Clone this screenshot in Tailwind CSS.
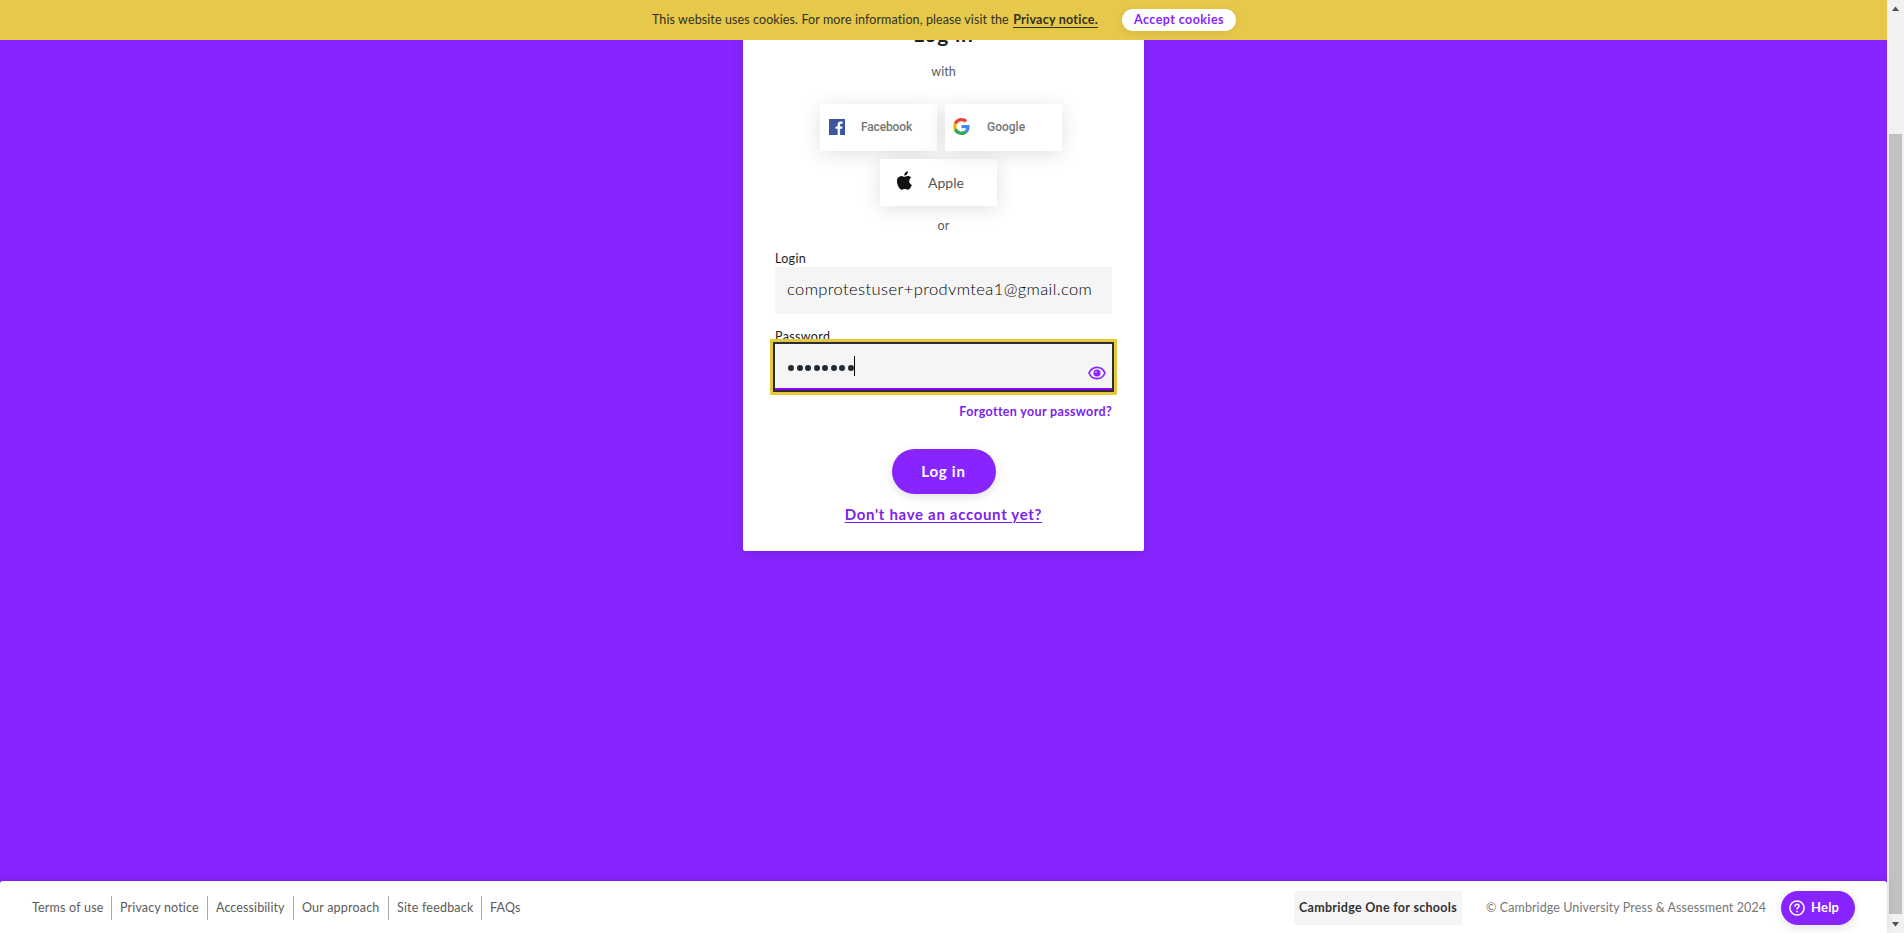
<!DOCTYPE html>
<html lang="en">
<head>
<meta charset="utf-8">
<title>Log in | Cambridge One</title>
<script src="https://cdn.jsdelivr.net/npm/@tailwindcss/browser@4"></script>
</head>
<body class="h-[933px] w-[1904px] overflow-hidden bg-white font-['Lato',sans-serif] text-[12.5px] text-[#5b5b5b]">
<div class="flex h-full">
  <div class="relative flex w-[1887px] flex-col bg-[#8724ff]">
    <header class="absolute inset-x-0 top-0 z-10 flex h-10 items-center bg-[#e6c84b] pl-[652px] text-[#33311f]">
      <p class="flex w-[446px] justify-between whitespace-nowrap leading-4"><span class="tracking-[0.1px]">This website uses cookies. For more information, please visit the</span><a class="border-b border-[#33311f] font-bold leading-[15px] tracking-[0.25px]">Privacy notice.</a></p>
      <button class="ml-6 h-[22px] w-[114px] rounded-full bg-white text-center font-bold tracking-[0.42px] text-[#8724ff] shadow-[0_2px_8px_rgba(0,0,0,0.08)]">Accept cookies</button>
    </header>

    <main class="flex-1 pl-[743px]">
      <section class="flex h-[551px] w-[401px] flex-col items-center rounded-b-[2px] bg-white pt-5 shadow-[0_2px_12px_rgba(0,0,0,0.12)]">
        <h1 class="h-7 text-[21px] font-bold leading-7 tracking-[0.8px] text-[#222]">Log in</h1>
        <p class="mt-4 h-4 leading-4">with</p>
        <div class="mt-6 flex w-full gap-2 pl-[77px] font-['Roboto',sans-serif] text-xs font-medium text-[#757575]">
          <button class="flex h-[47px] w-[117px] items-center bg-white pb-[2px] pl-[9px] shadow-[0_3px_20px_rgba(0,0,0,0.12)]">
            <svg class="size-4" viewBox="0 0 16 16"><path fill="#3b55a0" d="M0 0h16v16h-4.900v-6.200h2.100l.3-2.400h-2.400V5.900c0-.7.200-1.200 1.200-1.200h1.300V2.500c-.2 0-1-.1-1.900-.1-1.900 0-3.100 1.100-3.100 3.200v1.800H6.500v2.400h2.100V16H0z"/></svg>
            <span class="ml-4 tracking-[-0.15px]">Facebook</span>
          </button>
          <button class="relative z-[1] flex h-[47px] w-[117px] items-center bg-white pb-[2px] pl-[8px] shadow-[0_3px_20px_rgba(0,0,0,0.12)]">
            <svg class="size-[17px]" viewBox="0 0 48 48"><path fill="#EA4335" d="M24 9.500c3.540 0 6.710 1.220 9.210 3.600l6.850-6.850C35.900 2.380 30.470 0 24 0 14.620 0 6.510 5.380 2.560 13.220l7.980 6.190C12.430 13.720 17.740 9.500 24 9.500z"/><path fill="#4285F4" d="M46.980 24.550c0-1.570-.15-3.090-.38-4.550H24v9.020h12.940c-.58 2.960-2.260 5.480-4.780 7.180l7.730 6c4.510-4.180 7.090-10.360 7.090-17.650z"/><path fill="#FBBC05" d="M10.530 28.590A14.500 14.500 0 0 1 9.770 24c0-1.600.27-3.140.76-4.590l-7.980-6.190A23.900 23.900 0 0 0 0 24c0 3.880.92 7.540 2.560 10.780z"/><path fill="#34A853" d="M24 48c6.480 0 11.930-2.130 15.890-5.810l-7.730-6c-2.150 1.450-4.920 2.300-8.160 2.300-6.260 0-11.570-4.220-13.470-9.910l-7.980 6.190C6.510 42.620 14.620 48 24 48z"/></svg>
            <span class="ml-[17px]">Google</span>
          </button>
        </div>
        <button class="mr-[10px] mt-2 flex h-[47px] w-[117px] shrink-0 items-center self-center bg-white pl-[15px] shadow-[0_3px_20px_rgba(0,0,0,0.12)]">
          <svg class="mb-[5px] h-[21px] w-[17px]" viewBox="0 0 17 21" preserveAspectRatio="none"><path fill="#111" d="M14.200 11.200c0-2.200 1.700-3.300 1.900-3.500-1-1.600-2.700-1.800-3.300-1.800-1.400-.1-2.700.8-3.400.8s-1.800-.8-2.900-.8C5 6 3.600 6.800 2.800 8.100c-1.700 2.800-.4 7 1.100 9.300.8 1.100 1.700 2.400 2.900 2.300 1.200 0 1.600-.7 3-.7s1.800.7 3 .7c1.300 0 2.100-1.100 2.800-2.300.9-1.300 1.300-2.500 1.300-2.600 0 0-2.700-1-2.700-3.600zM12 4.200c.6-.8 1-1.800.9-2.900-.9 0-2 .6-2.700 1.400-.6.7-1.100 1.700-.9 2.800 1 .1 2-.5 2.700-1.300z"/></svg>
          <span class="ml-4 text-[14px] text-[#555]">Apple</span>
        </button>
        <p class="mt-3 h-4 leading-4 tracking-[0.2px]">or</p>

        <form class="mt-[17px] flex w-[337px] flex-col">
          <label class="h-4 leading-4 tracking-[0.3px] text-[#222]">Login</label>
          <div class="flex h-[47px] items-center bg-[#f5f5f5] pb-[2px] pl-3 text-[16.5px] text-black"><span class="font-light tracking-[0.4px]">comprotestuser+prodvmtea1@gmail.com</span></div>
          <label class="mt-[15px] h-[15px] leading-4 tracking-[0.35px] text-[#222]">Password</label>
          <div class="relative flex h-[46px] items-center border-b-2 border-[#8f00ff] bg-[#f5f5f5] pl-[13px] shadow-[0_0_0_2px_#2d2d2d,0_0_0_5px_#e6c83f]">
            <span class="flex h-5 items-center gap-[2.5px] border-r border-black pt-[3px]">
              <i class="size-[6px] rounded-full bg-[#222b33]"></i><i class="size-[6px] rounded-full bg-[#222b33]"></i><i class="size-[6px] rounded-full bg-[#222b33]"></i><i class="size-[6px] rounded-full bg-[#222b33]"></i><i class="size-[6px] rounded-full bg-[#222b33]"></i><i class="size-[6px] rounded-full bg-[#222b33]"></i><i class="size-[6px] rounded-full bg-[#222b33]"></i><i class="size-[6px] rounded-full bg-[#222b33]"></i>
            </span>
            <svg class="ml-auto mr-[6px] mt-[14px] h-[14px] w-[18px]" viewBox="0 0 18 14" fill="none"><path stroke="#8724ff" stroke-width="1.700" d="M1 7C4.300-.6 13.700-.6 17 7 13.700 14.600 4.300 14.600 1 7z"/><circle cx="9" cy="7" r="3.500" fill="#8724ff"/><circle cx="8" cy="6" r="1" fill="#c9a0ff"/></svg>
          </div>
          <a class="mt-[14px] h-4 self-end font-bold leading-4 tracking-[0.34px] text-[#7d22ee]">Forgotten your password?</a>
        </form>
        <button class="mt-[29px] h-[45px] w-[104px] shrink-0 rounded-full bg-[#8724ff] pb-[1px] text-[15px] font-bold tracking-[0.75px] text-white shadow-[0_3px_10px_rgba(0,0,0,0.12)]">Log in</button>
        <a class="mt-[10px] h-5 text-[15px] font-bold leading-5 tracking-[0.68px] text-[#7d22ee] underline underline-offset-2">Don't have an account yet?</a>
      </section>
    </main>

    <footer class="flex h-[52px] items-center rounded-t-[3px] bg-white pl-[32px] pt-[1px] shadow-[0_-2px_8px_rgba(0,0,0,0.1)]">
      <nav class="flex h-6 items-center whitespace-nowrap leading-6 tracking-[0.2px]">
        <a class="h-6 w-[80px] border-r border-[#aaa]">Terms of use</a>
        <a class="h-6 w-[96px] border-r border-[#aaa] pl-2 tracking-[0.15px]">Privacy notice</a>
        <a class="h-6 w-[86px] border-r border-[#aaa] pl-2 tracking-[0.1px]">Accessibility</a>
        <a class="h-6 w-[95px] border-r border-[#aaa] pl-2">Our approach</a>
        <a class="h-6 w-[93px] border-r border-[#aaa] pl-2">Site feedback</a>
        <a class="h-6 pl-2">FAQs</a>
      </nav>
      <div class="ml-auto flex items-center whitespace-nowrap">
        <div class="h-[34px] w-[168px] bg-[#f5f5f5] text-center font-bold leading-[34px] tracking-[0.3px] text-[#333]">Cambridge One for schools</div>
        <p class="ml-6 w-[295px] pt-px tracking-[0.09px] text-[#777]">© Cambridge University Press &amp; Assessment 2024</p>
        <button class="mr-[32px] flex h-[34px] w-[74px] items-center rounded-full bg-[#8724ff] pl-2 text-[13px] font-bold text-white shadow-[0_3px_10px_rgba(0,0,0,0.12)]">
          <svg class="size-4" viewBox="0 0 16 16" fill="none" stroke="#fff" stroke-width="1.500" stroke-linecap="round"><circle cx="8" cy="8" r="7.100"/><path d="M6 6.300c0-2.700 4-2.500 4-.1 0 1.500-2 1.500-2 2.900M8 11.600v.1"/></svg>
          <span class="ml-[6px] tracking-[0.2px]">Help</span>
        </button>
      </div>
    </footer>
  </div>
  <aside class="flex w-[17px] flex-col items-center bg-[#f1f1f1]">
    <svg class="h-[17px] w-[17px]" viewBox="0 0 17 17"><path fill="#505050" d="M8.500 6.500 12 11H5z"/></svg>
    <div class="mt-[117px] h-[780px] w-[13px] bg-[#c1c1c1]"></div>
    <svg class="mt-[2px] h-[17px] w-[17px]" viewBox="0 0 17 17"><path fill="#505050" d="M8.500 10.500 12 6H5z"/></svg>
  </aside>
</div>
</body>
</html>
